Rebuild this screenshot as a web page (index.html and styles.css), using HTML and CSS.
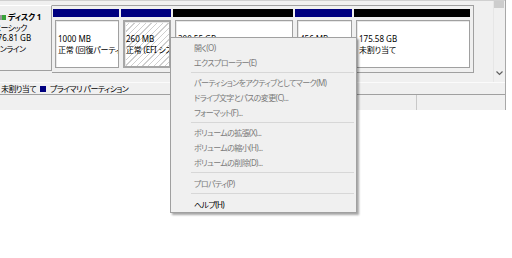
FILE: index.html
```html
<!DOCTYPE html>
<html lang="ja">
<head>
<meta charset="utf-8">
<link rel="stylesheet" href="styles.css">
</head>
<body>
<div class="win">
  <div class="main">
    <div class="diskrow">
      <div class="label">
        <div class="lname"><span class="dicon"></span><b>ディスク&nbsp;1</b></div>
        <div class="jp">ベーシック</div>
        <div>476.81 GB</div>
        <div class="jp">オンライン</div>
      </div>
      <div class="parts">
        <div class="part p1"><div class="bar primary"></div><div class="body"><div>1000 MB</div><div class="jp">正常 (回復パーティション)</div></div></div>
        <div class="part p2"><div class="bar primary"></div><div class="body sel"><div>260 MB</div><div class="jp">正常 (EFI システム パーティション)</div></div></div>
        <div class="part p3"><div class="bar unalloc"></div><div class="body"><div>300.55 GB</div><div class="jp">正常 (ブート, ページ ファイル)</div></div></div>
        <div class="part p4"><div class="bar primary"></div><div class="body"><div>456 MB</div><div class="jp">正常 (回復パーティション)</div></div></div>
        <div class="part p5"><div class="bar unalloc"></div><div class="body"><div>175.58 GB</div><div class="jp">未割り当て</div></div></div>
      </div>
    </div>
    <div class="vscroll"><div class="thumb"></div><div class="track"></div><div class="arrow"><svg width="7" height="5" viewBox="0 0 7 5"><path d="M0.5 0.5 L3.5 3.5 L6.5 0.5" fill="none" stroke="#606060" stroke-width="1.2"/></svg></div></div>
  </div>
  <div class="legend jp"><span class="sw black"></span>未割り当て <span class="sw navy"></span>プライマリ パーティション</div>
  <div class="status"><div class="s1"></div><div class="s2"></div></div>
</div>
<div class="menu jp">
  <div class="item">開く(O)</div>
  <div class="item">エクスプローラー(E)</div>
  <div class="sep"></div>
  <div class="item">パーティションをアクティブとしてマーク(M)</div>
  <div class="item">ドライブ文字とパスの変更(C)...</div>
  <div class="item">フォーマット(F)...</div>
  <div class="sep"></div>
  <div class="item">ボリュームの拡張(X)...</div>
  <div class="item">ボリュームの縮小(H)...</div>
  <div class="item">ボリュームの削除(D)...</div>
  <div class="sep s6"></div>
  <div class="item">プロパティ(P)</div>
  <div class="sep s6"></div>
  <div class="item on">ヘルプ(H)</div>
</div>
</body>
</html>
```

FILE: styles.css
```css
html, body {
  margin: 0;
  padding: 0;
  width: 512px;
  height: 258px;
  overflow: hidden;
  background: #ffffff;
  font-family: "Noto Sans", "Noto Sans CJK JP", sans-serif;
  font-feature-settings: "palt";
  font-size: 8px;
  color: #000;
}
.jp { letter-spacing: -0.6px; }
.body .jp { letter-spacing: -0.2px; }
.win {
  width: 505px;
  height: 110px;
  background: #f0f0f0;
  border-right: 1px solid #a8a8a8;
  display: flex;
  flex-direction: column;
  overflow: hidden;
}
.main {
  height: 82px;
  display: flex;
  border-top: 1px solid #d0d0d0;
  box-sizing: border-box;
}
.diskrow {
  width: 474px;
  display: flex;
  padding-top: 4px;
  height: 68px;
}
.label {
  width: 62px;
  margin-left: -10px;
  box-sizing: border-box;
  padding: 6px 0 0 3px;
  line-height: 10.7px;
  border-right: 1px solid #a0a0a0;
  border-bottom: 1px solid #a0a0a0;
  border-top: 1px solid #ffffff;
  height: 66px;
  white-space: nowrap;
  overflow: hidden;
}
.lname {
  display: flex;
  align-items: center;
  gap: 2px;
  margin-left: 3px;
  letter-spacing: -0.3px;
}
.dicon {
  width: 10px;
  height: 5px;
  background: linear-gradient(90deg, #9a9a9a 0 60%, #3aa33a 60% 100%);
  display: inline-block;
}
.parts {
  flex: 1;
  display: flex;
  gap: 2px;
  padding: 3px 3px 3px 1px;
  border: 1px solid #a0a0a0;
  border-left: none;
  box-sizing: border-box;
  height: 68px;
}
.part {
  display: flex;
  flex-direction: column;
  overflow: hidden;
}
.p1 { width: 66px; }
.p2 { width: 50px; }
.p3 { width: 120px; }
.p4 { width: 57px; }
.p5 { width: 116px; }
.bar { height: 8px; flex: none; }
.primary { background: #00007f; }
.unalloc { background: #000; }
.body {
  margin-top: 3px;
  margin-left: 2px;
  height: 48px;
  box-sizing: border-box;
  background: #fff;
  border: 1px solid #a0a0a0;
  box-shadow: inset 1px 1px 0 #e8e8e8;
  padding: 12px 0 0 2px;
  line-height: 11px;
  white-space: nowrap;
  overflow: hidden;
}
.body.sel {
  border: 2px solid #a6a6a6;
  padding: 11px 0 0 1px;
  background: repeating-linear-gradient(135deg, #ffffff 0 3px, #cfcfcf 3px 4px);
}
.vscroll {
  width: 10px;
  margin-left: 19px;
  display: flex;
  flex-direction: column;
  background: #f0f0f0;
  border-left: 1px solid #e6e6e6;
}
.thumb { height: 7px; background: #cdcdcd; }
.track { flex: 1; }
.arrow { height: 11px; display: flex; justify-content: center; align-items: flex-start; }
.legend {
  height: 11px;
  display: flex;
  align-items: center;
  border-top: 1px solid #fbfbfb;
  border-bottom: 1px solid #a0a0a0;
  white-space: nowrap;
  line-height: 10px;
}
.sw { width: 6px; height: 6px; display: inline-block; margin-right: 4px; }
.sw.black { background: #000; margin-left: -9px; }
.sw.navy { background: #00007f; margin-left: 4px; }
.status {
  flex: 1;
  display: flex;
}
.s1 { width: 416px; border-right: 1px solid #c8c8c8; }
.s2 { flex: 1; }
.menu {
  position: absolute;
  left: 170px;
  top: 37px;
  width: 187px;
  height: 176px;
  box-sizing: border-box;
  background: #f0f0f0;
  border: 1px solid #a0a0a0;
  box-shadow: 2px 2px 2px rgba(0,0,0,0.35);
  padding-top: 2px;
}
.item {
  height: 15px;
  line-height: 15px;
  padding-left: 23px;
  color: #7a7a7a;
  white-space: nowrap;
}
.item.on { color: #000; }
.sep {
  height: 1px;
  background: #d7d7d7;
  margin: 2px 2px 2px 20px;
}
.sep.s6 { margin-bottom: 3px; margin-top: 2px; }
```
